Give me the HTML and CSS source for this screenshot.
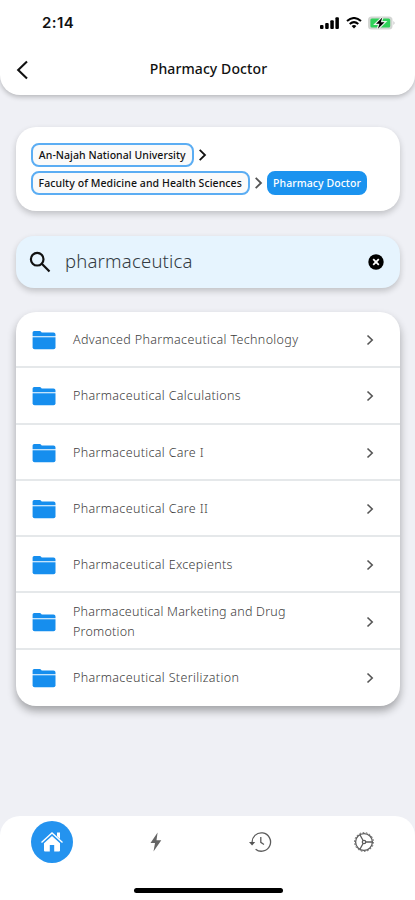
FILE: index.html
```html
<!DOCTYPE html>
<html lang="en">
<head>
<meta charset="utf-8">
<title>Pharmacy Doctor</title>
<link rel="stylesheet" href="styles.css">
</head>
<body>
<svg class="defs" width="0" height="0" aria-hidden="true">
  <symbol id="folder" viewBox="0 0 24 20">
    <path d="M0.6 6.2V2.6Q0.6 1 2.2 1H7.6Q8.8 1 9.3 2L9.7 2.6H21.5Q23.5 2.6 23.5 4.6V6.2Z"/>
    <path d="M0.6 7.3H23.5V17.2Q23.5 19.2 21.5 19.2H2.6Q0.6 19.2 0.6 17.2Z"/>
  </symbol>
  <symbol id="chevron" viewBox="0 0 8 12">
    <path d="M1.5 1.5L6.2 6L1.5 10.5"/>
  </symbol>
</svg>
<div class="screen">
  <header class="header">
    <div class="status">
      <span class="time">2:14</span>
      <div class="indicators">
        <svg class="signal" width="20" height="12" viewBox="0 0 20 12"><rect x="0" y="8" width="3.5" height="4" rx="1"/><rect x="5.2" y="6" width="3.5" height="6" rx="1"/><rect x="10.3" y="3.2" width="3.5" height="8.8" rx="1"/><rect x="15.4" y="0.3" width="3.5" height="11.7" rx="1"/></svg>
        <svg class="wifi" width="16" height="12" viewBox="0 0 16 12"><path d="M1 4.1Q8-2.1 15 4.1M3.7 7Q8 3.2 12.3 7"/><path class="dot" d="M5.6 9Q8 7 10.4 9L8 11.6Z"/></svg>
        <svg class="battery" width="28" height="14" viewBox="0 0 28 14"><rect x="0" y="0.5" width="24.5" height="13" rx="3.5" fill="#d3d6d3"/><rect x="2.4" y="2.5" width="19.8" height="9" rx="1.5" fill="#2fd159"/><path d="M25.5 5Q27.5 7 25.5 9Z" fill="#bbb"/><path d="M14.3 1.5L8 7.8H11.5L9.9 12.7L16.5 6.2H12.8Z" fill="#000" stroke="#e8f5ea" stroke-width="2.4" paint-order="stroke"/></svg>
      </div>
    </div>
    <div class="titlebar">
      <svg class="back" width="13" height="20" viewBox="0 0 13 20"><path d="M11 1.5L2.2 10L11 18.5"/></svg>
      <h1>Pharmacy Doctor</h1>
    </div>
  </header>

  <main class="content">
    <nav class="crumbs">
      <div class="crumb-row">
        <span class="crumb university">An-Najah National University</span>
        <svg class="crumb-arrow" width="9" height="14"><use href="#chevron"/></svg>
      </div>
      <div class="crumb-row">
        <span class="crumb faculty">Faculty of Medicine and Health Sciences</span>
        <svg class="crumb-arrow muted" width="9" height="14"><use href="#chevron"/></svg>
        <span class="crumb current">Pharmacy Doctor</span>
      </div>
    </nav>

    <div class="search">
      <svg class="magnifier" width="22" height="22" viewBox="0 0 22 22"><circle cx="8.2" cy="8.2" r="6.3"/><path d="M12.8 12.8L20.5 20.5"/></svg>
      <span class="query">pharmaceutica</span>
      <svg class="clear" width="16" height="16" viewBox="0 0 16 16"><circle cx="8" cy="8" r="7.7"/><path d="M5.2 5.2L10.8 10.8M10.8 5.2L5.2 10.8"/></svg>
    </div>

    <ul class="list">
      <li><svg class="folder" width="24" height="20"><use href="#folder"/></svg><span class="name">Advanced Pharmaceutical Technology</span><svg class="go" width="8" height="12"><use href="#chevron"/></svg></li>
      <li><svg class="folder" width="24" height="20"><use href="#folder"/></svg><span class="name">Pharmaceutical Calculations</span><svg class="go" width="8" height="12"><use href="#chevron"/></svg></li>
      <li><svg class="folder" width="24" height="20"><use href="#folder"/></svg><span class="name">Pharmaceutical Care I</span><svg class="go" width="8" height="12"><use href="#chevron"/></svg></li>
      <li><svg class="folder" width="24" height="20"><use href="#folder"/></svg><span class="name">Pharmaceutical Care II</span><svg class="go" width="8" height="12"><use href="#chevron"/></svg></li>
      <li><svg class="folder" width="24" height="20"><use href="#folder"/></svg><span class="name">Pharmaceutical Excepients</span><svg class="go" width="8" height="12"><use href="#chevron"/></svg></li>
      <li><svg class="folder" width="24" height="20"><use href="#folder"/></svg><span class="name two-line">Pharmaceutical Marketing and Drug<br>Promotion</span><svg class="go" width="8" height="12"><use href="#chevron"/></svg></li>
      <li><svg class="folder" width="24" height="20"><use href="#folder"/></svg><span class="name">Pharmaceutical Sterilization</span><svg class="go" width="8" height="12"><use href="#chevron"/></svg></li>
    </ul>
  </main>

  <footer class="tabs">
    <div class="tab-row">
      <div class="tab"><span class="home"><svg width="24" height="22" viewBox="0 0 24 22"><path d="M1.5 11.6L12 2L22.5 11.6" fill="none" stroke="#fff" stroke-width="1.4"/><path d="M17 1.5H20V8L17 5.2Z"/><path d="M4 12.3L12 5L20 12.3V19.5Q20 20.5 19 20.5H14.2V14H9.8V20.5H5Q4 20.5 4 19.5Z"/></svg></span></div>
      <div class="tab"><svg width="14" height="22" viewBox="0 0 14 22"><path d="M8.6 1.5L1.5 12H6L4.5 20.5L12.3 9.3H7.5Z" fill="#666"/></svg></div>
      <div class="tab"><svg class="line" width="24" height="22" viewBox="0 0 24 22"><path d="M4.2 12A9.2 9.2 0 1 1 7.6 18.2M12.8 6V11.4L16 13.5"/><path d="M1 11H7.2L4.1 14.5Z" fill="#555" stroke="none"/></svg></div>
      <div class="tab"><svg class="line" width="22" height="22" viewBox="0 0 22 22"><circle cx="11" cy="11" r="8.4"/><circle cx="11" cy="11" r="9.4" stroke-dasharray="1.6 1.681" stroke-width="1"/><circle cx="11" cy="11" r="1.7"/><path d="M12.7 11H19.4M10.1 9.5L6.9 3.8M10.1 12.5L6.9 18.2"/></svg></div>
    </div>
    <div class="home-bar"></div>
  </footer>
</div>
</body>
</html>
```

FILE: styles.css
```css
* { box-sizing: border-box; }
body {
  margin: 0;
  background: #eff0f5;
  font-family: "Noto Sans", "Open Sans", sans-serif;
  color: #111;
}
svg { display: block; flex: none; }
.defs { position: absolute; }
.screen {
  width: 415px;
  height: 900px;
  display: flex;
  flex-direction: column;
  overflow: hidden;
}
.header {
  flex: none;
  height: 95px;
  background: #fff;
  border-radius: 0 0 20px 20px;
  box-shadow: 0 2px 5px rgba(0, 0, 0, .24);
}
.status {
  height: 46px;
  padding: 0 19px 0 42px;
  display: flex;
  align-items: center;
  justify-content: space-between;
}
.time {
  font: 600 15px/20px Inter, sans-serif;
  letter-spacing: .4px;
}
.indicators { display: flex; align-items: center; gap: 6px; }
.wifi path { fill: none; stroke: #000; stroke-width: 2; }
.wifi .dot { fill: #000; stroke: none; }
.titlebar {
  height: 47px;
  padding: 0 16px;
  display: grid;
  grid-template-columns: 13px 1fr 11px;
  align-items: center;
}
.back path { fill: none; stroke: #111; stroke-width: 2.1; }
h1 {
  margin: 0;
  padding-bottom: 2px;
  text-align: center;
  font-size: 14px;
  line-height: 20px;
  font-weight: 500;
  letter-spacing: .1px;
}
.content {
  flex: 1;
  padding: 32px 15px 0 16px;
  display: flex;
  flex-direction: column;
}
.crumbs {
  height: 84px;
  padding: 16px 14.5px;
  display: flex;
  flex-direction: column;
  gap: 4px;
  background: #fff;
  border-radius: 20px;
  box-shadow: 0 3px 6px rgba(0, 0, 0, .2);
}
.crumb-row { display: flex; align-items: center; gap: 4px; height: 24px; }
.crumb {
  height: 24px;
  border: 2px solid #5badf3;
  border-radius: 8px;
  background: #fafafa;
  font-size: 10.5px;
  line-height: 20px;
  font-weight: 500;
  text-align: center;
  white-space: nowrap;
}
.university { width: 163.5px; letter-spacing: .05px; }
.faculty { width: 219.5px; letter-spacing: .08px; }
.current { width: 100px; background: #1b93ef; border-color: #1b93ef; color: #fff; letter-spacing: .06px; }
.crumb-arrow, .go { fill: none; stroke: #111; stroke-width: 1.6; }
.crumb-arrow.muted, .go { stroke: #555; }
.search {
  height: 52px;
  margin-top: 25px;
  padding: 0 16.5px 0 13px;
  display: flex;
  align-items: center;
  background: #e6f4fe;
  border-radius: 18px;
  box-shadow: 0 3px 6px rgba(0, 0, 0, .2);
}
.magnifier { fill: none; stroke: #111; stroke-width: 2.2; }
.query {
  flex: 1;
  margin-left: 14px;
  padding-bottom: 2px;
  font-size: 18.5px;
  line-height: 28px;
  font-weight: 300;
  letter-spacing: .2px;
  color: #333b42;
}
.clear path { stroke: #fff; stroke-width: 1.8; }
.list {
  height: 394px;
  margin: 24px 0 0;
  padding: 0;
  list-style: none;
  display: grid;
  grid-template-rows: repeat(7, 1fr);
  background: #fff;
  border-radius: 20px;
  box-shadow: 0 5px 8px rgba(0, 0, 0, .32);
}
.list li {
  display: flex;
  align-items: center;
  padding: 2px 26px 0 16px;
  border-bottom: 2px solid #e5e8ea;
}
.list li:last-child { border-bottom: 0; padding-top: 0; }
.folder { fill: #168eee; }
.name {
  flex: 1;
  margin-left: 17px;
  font-size: 12.5px;
  line-height: 20px;
  font-weight: 300;
  letter-spacing: .34px;
  color: #3c3c3c;
}
.two-line { letter-spacing: .23px; }
.tabs {
  flex: none;
  height: 84px;
  background: #fff;
  border-radius: 20px 20px 0 0;
  display: flex;
  flex-direction: column;
  align-items: center;
}
.tab-row {
  width: 100%;
  height: 52px;
  display: grid;
  grid-template-columns: repeat(4, 103.9px);
}
.tab { display: flex; align-items: center; justify-content: center; }
.home {
  width: 42px;
  height: 42px;
  border-radius: 50%;
  background: #2493ef;
  display: flex;
  align-items: center;
  justify-content: center;
}
.home svg { fill: #fff; }
.line { fill: none; stroke: #5c5c5c; stroke-width: 1.3; }
.home-bar {
  width: 149px;
  height: 5px;
  margin: 20px 0 0 1px;
  border-radius: 3px;
  background: #000;
}
```
